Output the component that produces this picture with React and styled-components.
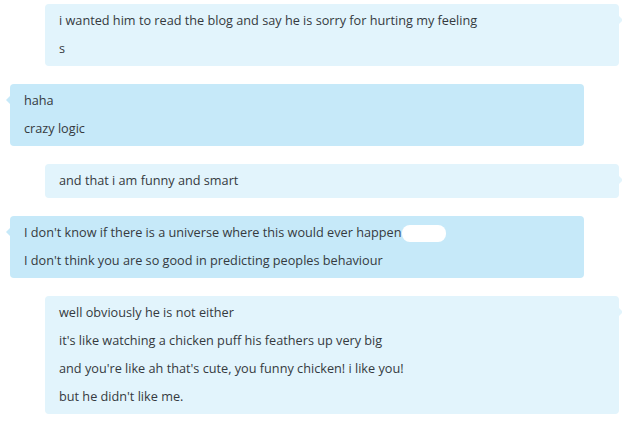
import React from 'react';
import styled, { createGlobalStyle } from 'styled-components';

const GlobalStyle = createGlobalStyle`
  body {
    margin: 0;
    background: #ffffff;
    font-family: "Open Sans", "Noto Sans", sans-serif;
  }
`;

const messages = [
  { out: true, lines: ['i wanted him to read the blog and say he is sorry for hurting my feeling', 's'] },
  { out: false, lines: ['haha', 'crazy logic'] },
  { out: true, lines: ['and that i am funny and smart'] },
  { out: false, lines: ["I don't know if there is a universe where this would ever happen", "I don't think you are so good in predicting peoples behaviour"], redact: true },
  {
    out: true,
    lines: [
      'well obviously he is not either',
      "it's like watching a chicken puff his feathers up very big",
      "and you're like ah that's cute, you funny chicken! i like you!",
      "but he didn't like me.",
    ],
  },
];

// chat log
const App = () => {
  return (
    <>
      <GlobalStyle />
      <Chat>
        {messages.map((m, i) => (
          <Bubble key={i} $out={m.out}>
            {m.lines.map((line, j) => (
              <Line key={j}>
                {line}
                {m.redact && j === 0 && <Redacted />}
              </Line>
            ))}
          </Bubble>
        ))}
      </Chat>
    </>
  );
};
export default App;

// Styling
const Chat = styled.div`
  width: 622px;
  height: 434px;
  box-sizing: border-box;
  padding-top: 4px;
  display: flex;
  flex-direction: column;
  gap: 18px;
  overflow: hidden;
`;

const Bubble = styled.div`
  position: relative;
  width: 574px;
  box-sizing: border-box;
  margin-left: ${p => (p.$out ? '45px' : '10px')};
  padding: 2px 14px 4px;
  border-radius: 4px;
  background: ${p => (p.$out ? '#e2f4fc' : '#c6e9f9')};

  &::after {
    content: '';
    position: absolute;
    top: 12px;
    ${p => (p.$out ? 'right: -4px;' : 'left: -4px;')}
    border-top: 4px solid transparent;
    border-bottom: 4px solid transparent;
    ${p => (p.$out ? 'border-left: 4px solid #e2f4fc;' : 'border-right: 4px solid #c6e9f9;')}
  }
`;

const Line = styled.div`
  font-size: 12.7px;
  line-height: 28px;
  color: #353a40;
  white-space: nowrap;
`;

const Redacted = styled.span`
  display: inline-block;
  vertical-align: middle;
  width: 44px;
  height: 17px;
  margin-left: 1px;
  border-radius: 8px;
  background: #ffffff;
`;
